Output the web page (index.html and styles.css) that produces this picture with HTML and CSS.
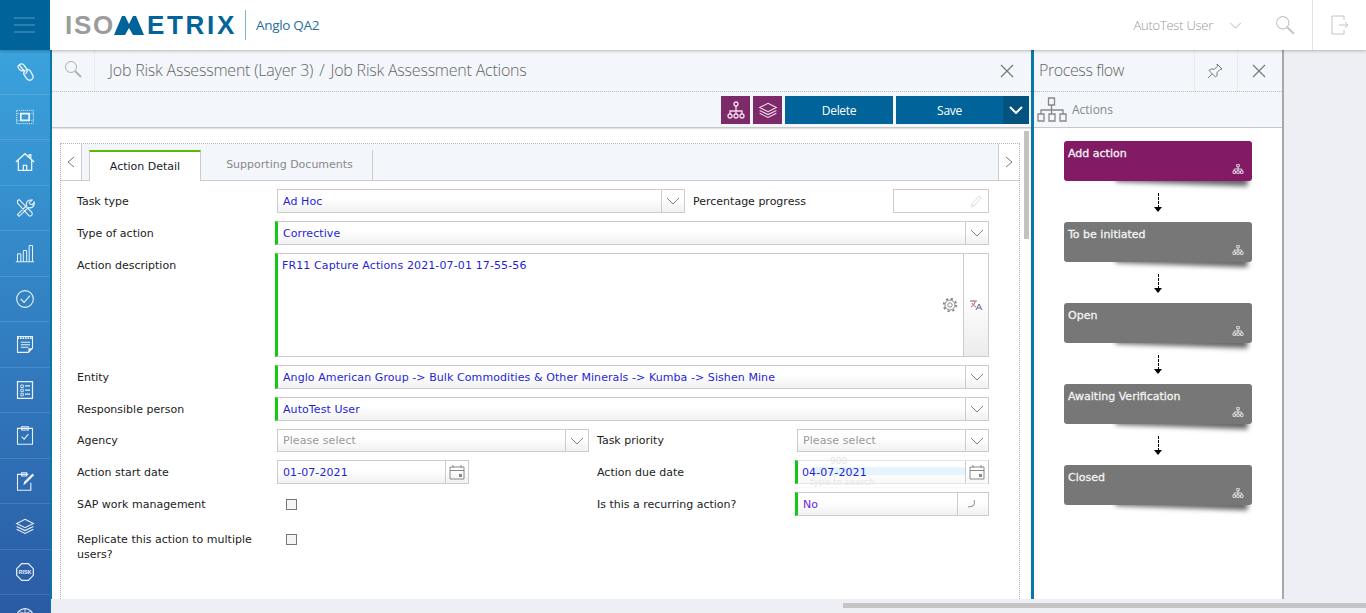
FILE: index.html
```html
<!DOCTYPE html>
<html lang="en">
<head>
    <meta charset="UTF-8">
    <title>IsoMetrix - Job Risk Assessment Actions</title>
    <link rel="stylesheet" href="styles.css">
</head>
<body>
    <svg class="sprites" width="0" height="0">
        <symbol id="i-tree" viewBox="0 0 18 16">
            <path d="M7 .5h4v4H7zM9 4.500V8M3 11V8h12v3M9 8v3M1 11h4v4H1zM7 11h4v4H7zM13 11h4v4h-4z" fill="none" stroke="currentColor" stroke-width="1.500"/>
        </symbol>
        <symbol id="i-tree-round" viewBox="0 0 18 18">
            <circle cx="9" cy="3" r="2" fill="none" stroke="currentColor" stroke-width="1.400"/>
            <path d="M9 5v6M3 13v-3h12v3M9 10v3" fill="none" stroke="currentColor" stroke-width="1.400"/>
            <circle cx="3" cy="15" r="2" fill="none" stroke="currentColor" stroke-width="1.400"/>
            <circle cx="9" cy="15" r="2" fill="none" stroke="currentColor" stroke-width="1.400"/>
            <circle cx="15" cy="15" r="2" fill="none" stroke="currentColor" stroke-width="1.400"/>
        </symbol>
        <symbol id="i-layers" viewBox="0 0 24 24">
            <path d="M12 4l10 5-10 5L2 9zM2 12.500l10 5 10-5M2 16l10 5 10-5" fill="none" stroke="currentColor" stroke-width="1.300"/>
        </symbol>
        <symbol id="i-chev" viewBox="0 0 14 8">
            <path d="M1 1l6 6 6-6" fill="none" stroke="currentColor"/>
        </symbol>
        <symbol id="i-close" viewBox="0 0 14 14">
            <path d="M1 1l12 12M13 1L1 13" fill="none" stroke="currentColor" stroke-width="1.200"/>
        </symbol>
        <symbol id="i-search" viewBox="0 0 18 18">
            <circle cx="7" cy="7" r="5.500" fill="none" stroke="currentColor"/>
            <path d="M11 11l6 6" fill="none" stroke="currentColor" stroke-width="1.800"/>
        </symbol>
        <symbol id="i-cal" viewBox="0 0 16 16">
            <path d="M1 3h14v12H1zM1 6.500h14M4 1v3M12 1v3" fill="none" stroke="currentColor"/>
            <path d="M10 10h3v3h-3z" fill="currentColor"/>
        </symbol>
    </svg>

    <header class="topbar">
        <div class="menu-btn">
            <span></span><span></span><span></span>
        </div>
        <div class="logo">
            <span class="logo-iso">ISO</span>
            <svg class="logo-m" width="30" height="19" viewBox="0 0 30 19">
                <path d="M0 19L8 0h3l4 8 4-8h3l8 19H19l-4-7-4 7z" fill="#00649a"/>
            </svg>
            <span class="logo-rest">ETRIX</span>
        </div>
        <div class="client">Anglo QA2</div>
        <div class="user">
            <span>AutoTest User</span>
            <svg class="user-chev" width="13" height="7"><use href="#i-chev"/></svg>
        </div>
        <svg class="top-search" width="20" height="20"><use href="#i-search"/></svg>
        <div class="logout">
            <svg width="20" height="20" viewBox="0 0 20 20">
                <path d="M14 5V1H2v18h12v-4M9 10h9M15 7l3 3-3 3" fill="none" stroke="currentColor"/>
            </svg>
        </div>
    </header>

    <div class="workspace">
        <nav class="sidebar">
            <a class="side-item"><svg viewBox="0 0 24 24"><path d="M5 3.500c2-2 4.500-1.500 6 .5l3 4.500c1 2 .5 4-1.500 5.500M10.500 10c-2 1-4 .5-5.500-1.500L3.500 6C3 5.500 4 4.500 5 3.500zM13 10c2-1.500 4-1 5.500 1l2.500 4.500c1.500 2 1 4-1 5.500s-4.500 1-6-1l-3-4.500c-1-2-.5-4 1.500-5.500" fill="none" stroke="#fff" stroke-width="1.600"/></svg></a>
            <a class="side-item"><svg viewBox="0 0 24 24"><path d="M2 4h20v16H2z" fill="none" stroke="#fff" stroke-dasharray="1.500 1"/><path d="M7 8h10v8H7z" fill="none" stroke="#fff" stroke-width="2"/><path d="M2 8h5M2 16h5M17 8h5M17 16h5" stroke="#fff" stroke-dasharray="1 1"/></svg></a>
            <a class="side-item"><svg viewBox="0 0 24 24"><path d="M1 12L12 2l11 10M4 10v12h16V10M10 22v-6h4v6M17 6V3h2v5" fill="none" stroke="#fff" stroke-width="1.500"/></svg></a>
            <a class="side-item"><svg viewBox="0 0 24 24"><path d="M3 20l11-11c-1.500-4 2-7.500 6.500-6.500L17 5.500l1.500 2 2.500.5 2-3c1 4.500-3 8-7 6.500L5 22zM3 3l2-1 15 15c1 1 1 4-1 4.500s-2.500-.5-3-1L3 6z" fill="none" stroke="#fff" stroke-width="1.300"/></svg></a>
            <a class="side-item"><svg viewBox="0 0 24 24"><path d="M3 22V13h4v9M10 22V9h4v13M17 22V3h4v19M1 22.500h22" fill="none" stroke="#fff" stroke-width="1.200"/></svg></a>
            <a class="side-item"><svg viewBox="0 0 24 24"><circle cx="12" cy="12" r="10" fill="none" stroke="#fff" stroke-width="1.300"/><path d="M7 12l4 4 7-8" fill="none" stroke="#fff" stroke-width="1.300"/></svg></a>
            <a class="side-item"><svg viewBox="0 0 24 24"><path d="M3 3h18v14l-5 5H3z" fill="none" stroke="#fff" stroke-width="1.300"/><path d="M3 5h18" stroke="#fff" stroke-width="2" stroke-dasharray="2 1"/><path d="M7 10h11M7 13h11M7 16h9" stroke="#fff" stroke-width="1.300"/><path d="M16 22v-5h5z" fill="#fff"/></svg></a>
            <a class="side-item"><svg viewBox="0 0 24 24"><path d="M3 2h18v20H3z" fill="none" stroke="#fff" stroke-width="1.500"/><path d="M7 6h3v3H7zM7 11h3v3H7zM7 16h3v3H7z" fill="none" stroke="#fff"/><path d="M12 7h6M12 12h6M12 17h6" stroke="#fff" stroke-width="1.500"/></svg></a>
            <a class="side-item"><svg viewBox="0 0 24 24"><path d="M3 4h18v19H3zM8 2h8v4H8z" fill="none" stroke="#fff" stroke-width="1.300"/><path d="M8 14l3 3 5-6" fill="none" stroke="#fff" stroke-width="1.300"/></svg></a>
            <a class="side-item"><svg viewBox="0 0 24 24"><path d="M16 4H3v19h16v-9M8 2h6v4H8z" fill="none" stroke="#fff" stroke-width="1.300"/><path d="M10 17l1-4 10-10 2 2-10 10z" fill="#fff"/></svg></a>
            <a class="side-item"><svg viewBox="0 0 24 24"><use href="#i-layers"/></svg></a>
            <a class="side-item"><svg viewBox="0 0 24 24"><path d="M8 2h8l6 6v8l-6 6H8l-6-6V8z" fill="none" stroke="#fff" stroke-width="1.500"/><text class="risk" x="12" y="14.500" text-anchor="middle">RISK</text></svg></a>
            <a class="side-item"><svg viewBox="0 0 24 24"><circle cx="12" cy="12" r="10" fill="none" stroke="#fff" stroke-width="1.500"/><path d="M2 12h20M12 2v20M5 5c4 3 10 3 14 0" fill="none" stroke="#fff"/></svg></a>
        </nav>

        <main class="main">
            <div class="crumbs">
                <div class="crumb-search"><svg width="18" height="18"><use href="#i-search"/></svg></div>
                <div class="crumb-text">Job Risk Assessment (Layer 3)<i>/</i>Job Risk Assessment Actions</div>
                <svg class="crumb-close" width="14" height="14"><use href="#i-close"/></svg>
            </div>
            <div class="toolbar">
                <button class="square-btn"><svg width="18" height="18"><use href="#i-tree-round"/></svg></button>
                <button class="square-btn"><svg width="20" height="20"><use href="#i-layers"/></svg></button>
                <button class="action-btn">Delete</button>
                <div class="save-group">
                    <button class="action-btn save-btn">Save</button>
                    <button class="save-more"><svg width="14" height="8" viewBox="0 0 14 8"><path d="M1 1l6 6 6-6" fill="none" stroke="currentColor" stroke-width="2"/></svg></button>
                </div>
            </div>

            <div class="content">
                <div class="form-scrollbar"></div>
                <div class="form-box">
                    <div class="tabs">
                        <div class="tab-arrow"><svg width="8" height="12" viewBox="0 0 8 12"><path d="M7 1L1 6l6 5" fill="none" stroke="currentColor"/></svg></div>
                        <div class="tab active">Action Detail</div>
                        <div class="tab">Supporting Documents</div>
                        <div class="tab-fill"></div>
                        <div class="tab-arrow right"><svg width="8" height="12" viewBox="0 0 8 12"><path d="M1 1l6 5-6 5" fill="none" stroke="currentColor"/></svg></div>
                    </div>

                    <div class="form">
                        <div class="row">
                            <label class="label">Task type</label>
                            <div class="field w-408"><span class="value">Ad Hoc</span><span class="addon"><svg width="14" height="8"><use href="#i-chev"/></svg></span></div>
                            <label class="label-2">Percentage progress</label>
                            <div class="field plain w-96"><svg class="pencil" width="13" height="13" viewBox="0 0 13 13"><path d="M1 12l1-3 7-8 2 2-7 8zM2 9l2 2" fill="none" stroke="currentColor"/></svg></div>
                        </div>
                        <div class="row">
                            <label class="label">Type of action</label>
                            <div class="field req grow"><span class="value">Corrective</span><span class="addon"><svg width="14" height="8"><use href="#i-chev"/></svg></span></div>
                        </div>
                        <div class="row tall">
                            <label class="label">Action description</label>
                            <div class="field req grow area">
                                <span class="value">FR11 Capture Actions 2021-07-01 17-55-56</span>
                                <svg class="gear" width="16" height="16" viewBox="0 0 16 16"><circle cx="8" cy="8" r="2.200" fill="none" stroke="currentColor"/><circle cx="8" cy="8" r="5" fill="none" stroke="currentColor"/><circle cx="8" cy="8" r="6.300" fill="none" stroke="currentColor" stroke-width="1.800" stroke-dasharray="2.200 2.750"/></svg>
                                <span class="addon translate">
                                    <svg width="14" height="12" viewBox="0 0 14 12"><path d="M1 2h7M4 1v1M2 8c2-1 4-3 4-6M3 4c1 2 2 3 4 4" fill="none" stroke="#a66"/><path d="M7 11l3-6 3 6M8 9h4" fill="none" stroke="#668"/></svg>
                                </span>
                            </div>
                        </div>
                        <div class="row">
                            <label class="label">Entity</label>
                            <div class="field req grow"><span class="value">Anglo American Group -&gt; Bulk Commodities &amp; Other Minerals -&gt; Kumba -&gt; Sishen Mine</span><span class="addon"><svg width="14" height="8"><use href="#i-chev"/></svg></span></div>
                        </div>
                        <div class="row">
                            <label class="label">Responsible person</label>
                            <div class="field req grow"><span class="value">AutoTest User</span><span class="addon"><svg width="14" height="8"><use href="#i-chev"/></svg></span></div>
                        </div>
                        <div class="row short">
                            <label class="label">Agency</label>
                            <div class="field w-312"><span class="value muted">Please select</span><span class="addon"><svg width="14" height="8"><use href="#i-chev"/></svg></span></div>
                            <label class="label-2">Task priority</label>
                            <div class="field w-192"><span class="value muted">Please select</span><span class="addon"><svg width="14" height="8"><use href="#i-chev"/></svg></span></div>
                        </div>
                        <div class="row">
                            <label class="label">Action start date</label>
                            <div class="field w-192"><span class="value">01-07-2021</span><span class="addon"><svg width="16" height="16"><use href="#i-cal"/></svg></span></div>
                            <span class="gap-120"></span>
                            <label class="label-2">Action due date</label>
                            <div class="field req w-194 due">
                                <div class="ghost-list">
                                    <span class="ghost-top">900</span>
                                    <span class="ghost-band"></span>
                                    <span class="ghost-search">type to search</span>
                                </div>
                                <span class="value">04-07-2021</span>
                                <span class="addon"><svg width="16" height="16"><use href="#i-cal"/></svg></span>
                            </div>
                        </div>
                        <div class="row">
                            <label class="label">SAP work management</label>
                            <div class="check-cell"><span class="checkbox"></span></div>
                            <label class="label-2">Is this a recurring action?</label>
                            <div class="field req w-194">
                                <span class="value violet">No</span>
                                <span class="addon wide"><svg width="12" height="10" viewBox="0 0 12 10"><path d="M7 1c1 3 0 5-1 6l-5 1" fill="none" stroke="currentColor"/></svg></span>
                            </div>
                        </div>
                        <div class="row replicate">
                            <label class="label">Replicate this action to multiple users?</label>
                            <div class="check-cell"><span class="checkbox"></span></div>
                        </div>
                    </div>
                </div>
            </div>
        </main>

        <aside class="flow">
            <div class="flow-head">
                <span class="flow-title">Process flow</span>
                <span class="flow-btn"><svg width="16" height="16" viewBox="0 0 16 16"><path d="M10 1l5 5-2 .5-3 3 .2 3L8.500 14 2 7.500 4.500 6l3 .2 3-3zM5 11l-4 4" fill="none" stroke="currentColor"/></svg></span>
                <span class="flow-btn"><svg width="14" height="14"><use href="#i-close"/></svg></span>
            </div>
            <div class="flow-sub">
                <svg width="30" height="26" viewBox="0 0 30 26"><path d="M11.500 1h6v7h-6zM14.500 8v5M4 17v-4h22v4M14.500 13v4M1 17h6v7H1zM12 17h6v7h-6zM23 17h6v7h-6z" fill="none" stroke="currentColor" stroke-width="1.300"/></svg>
                <span>Actions</span>
            </div>
            <div class="flow-list">
                <div class="step current">Add action<svg width="12" height="10"><use href="#i-tree"/></svg></div>
                <div class="step-link"></div>
                <div class="step">To be initiated<svg width="12" height="10"><use href="#i-tree"/></svg></div>
                <div class="step-link"></div>
                <div class="step">Open<svg width="12" height="10"><use href="#i-tree"/></svg></div>
                <div class="step-link"></div>
                <div class="step">Awaiting Verification<svg width="12" height="10"><use href="#i-tree"/></svg></div>
                <div class="step-link"></div>
                <div class="step">Closed<svg width="12" height="10"><use href="#i-tree"/></svg></div>
            </div>
        </aside>
        <div class="rest"></div>
    </div>
    <div class="page-scroll"><span class="page-thumb"></span></div>
</body>
</html>
```

FILE: styles.css
```css
* {
    box-sizing: border-box;
}
html, body {
    height: 100%;
}
body {
    --primary-color: #00649a;
    --purple: #821a66;
    --border: #cccccc;
    --panel: #f3f6fa;
    margin: 0;
    overflow: hidden;
    display: flex;
    flex-direction: column;
    height: 613px;
    background: #eeeff5;
    font-family: "DejaVu Sans", Verdana, sans-serif;
    font-size: 11px;
    color: #222;
}
.sprites {
    position: absolute;
}
button {
    border: 0;
    padding: 0;
    font: inherit;
    color: #fff;
    cursor: pointer;
}

/* top bar */
.topbar {
    display: flex;
    align-items: center;
    flex: none;
    height: 50px;
    background: #fff;
    position: relative;
    z-index: 2;
    box-shadow: 0 1px 3px rgba(0, 0, 0, .25);
}
.menu-btn {
    width: 50px;
    height: 50px;
    padding-right: 1px;
    background: var(--primary-color);
    display: flex;
    flex-direction: column;
    align-items: center;
    justify-content: center;
    gap: 5px;
}
.menu-btn span {
    width: 21px;
    height: 2px;
    background: #2f7fae;
}
.logo {
    display: flex;
    align-items: center;
    margin-left: 15px;
    font-family: "Liberation Sans", Arial, sans-serif;
    font-size: 26px;
    font-weight: bold;
    padding-right: 8px;
    border-right: 1px solid #7fb0cc;
    height: 30px;
}
.logo-iso {
    color: #9c9c9c;
    letter-spacing: 1.700px;
}
.logo-m {
    margin: 0 3px 0 -1px;
}
.logo-rest {
    color: #00649a;
    letter-spacing: 2.700px;
}
.client {
    margin-left: 10px;
    font-family: "Open Sans", sans-serif;
    font-size: 13.500px;
    color: #1f6f9f;
    letter-spacing: -.3px;
}
.user {
    margin-left: auto;
    display: flex;
    align-items: center;
    gap: 16px;
    font-family: "Open Sans", sans-serif;
    font-size: 13px;
    font-weight: 300;
    letter-spacing: -.25px;
    color: #9a9a9a;
}
.user-chev {
    color: #aaa;
}
.top-search {
    margin-left: 33px;
    color: #c4c4c4;
}
.logout {
    margin-left: 17px;
    width: 54px;
    height: 50px;
    border-left: 1px solid #e4e4e4;
    display: flex;
    align-items: center;
    padding-left: 17px;
    color: #c4c4c4;
}

/* layout below the top bar */
.workspace {
    flex: 1;
    display: flex;
    min-height: 0;
}
.sidebar {
    flex: none;
    width: 52px;
    height: 563px;
    overflow: hidden;
    background: linear-gradient(#3aa2dc, #2a5ba5);
    border-right: 2px solid #0b77a9;
}
.side-item {
    display: flex;
    align-items: center;
    justify-content: center;
    height: 45.500px;
    border-bottom: 1px solid rgba(255, 255, 255, .12);
}
.side-item:first-child {
    height: 44.500px;
}
.side-item svg {
    width: 20px;
    height: 20px;
    color: #fff;
    opacity: .9;
}
.risk {
    font-family: "Liberation Sans", Arial, sans-serif;
    font-size: 6.500px;
    font-weight: bold;
    fill: #fff;
}
.main {
    flex: none;
    width: 979px;
    height: 549px;
    background: #fff;
    display: flex;
    flex-direction: column;
}
.crumbs {
    display: flex;
    align-items: center;
    height: 42px;
    flex: none;
    background: var(--panel);
    border-bottom: 1px dotted #bbb;
}
.crumb-search {
    width: 43px;
    height: 41px;
    padding: 10px 0 0 12px;
    border-right: 1px dotted #e0e0e0;
    color: #b0b0b0;
}
.crumb-text {
    margin: 0 0 2px 14px;
    font-family: "Open Sans", sans-serif;
    font-size: 16px;
    font-weight: 300;
    letter-spacing: -.22px;
    color: #666;
}
.crumb-text i {
    font-style: normal;
    margin: 0 6px;
}
.crumb-close {
    margin-left: auto;
    margin-right: 17px;
    color: #777;
}
.toolbar {
    display: flex;
    justify-content: flex-end;
    flex: none;
    gap: 3px;
    height: 36px;
    padding: 4px 2px 0 0;
    background: var(--panel);
    border-bottom: 1px solid #c8c8c8;
    box-shadow: 0 1px 1px rgba(0, 0, 0, .1);
}
.square-btn {
    width: 29px;
    height: 28px;
    background: #7d2a6a;
    color: #f0d8ea;
    display: flex;
    align-items: center;
    justify-content: center;
}
.action-btn {
    width: 108px;
    height: 28px;
    background: var(--primary-color);
    font-family: "Open Sans", sans-serif;
    font-size: 12px;
    letter-spacing: -.3px;
}
.save-group {
    display: flex;
}
.save-btn {
    width: 107px;
}
.save-more {
    width: 26px;
    height: 28px;
    background: #04527e;
}
.content {
    flex: 1;
    position: relative;
    padding: 15px 11px 0 8px;
    min-height: 0;
}
.form-scrollbar {
    position: absolute;
    top: 3px;
    right: 2px;
    width: 5px;
    height: 108px;
    background: #c2c2c2;
}
.form-box {
    height: 100%;
    border: 1px dotted #b5b5b5;
    border-bottom: 0;
}

/* tabs */
.tabs {
    display: flex;
    align-items: stretch;
    height: 37px;
    background: var(--panel);
    border-bottom: 1px solid var(--border);
}
.tab-arrow {
    width: 21px;
    background: #fff;
    border-right: 1px solid var(--border);
    display: flex;
    align-items: center;
    justify-content: center;
    color: #777;
    margin-right: 7px;
    border-bottom: 1px solid var(--border);
    height: 37px;
}
.tab-arrow.right {
    margin: 0;
    border-right: 0;
    border-left: 1px solid var(--border);
}
.tab {
    margin-top: 6px;
    padding: 8px 0 0 6px;
    text-align: center;
    border-right: 1px solid var(--border);
    color: #888;
    width: 172px;
}
.tab.active {
    width: 112px;
    height: 31px;
    background: #fff;
    color: #1a1a2a;
    border-top: 2px solid #5cb800;
    border-left: 1px solid var(--border);
    padding: 8px 0 0;
}
.tab-fill {
    flex: 1;
}

/* form */
.form {
    padding: 8px 30px 0 16px;
    display: flex;
    flex-direction: column;
    gap: 8px;
}
.row {
    display: flex;
    align-items: center;
    height: 24px;
}
.row.short {
    height: 23px;
}
.row.short .field {
    height: 23px;
}
.row.tall {
    height: 104px;
    align-items: flex-start;
}
.row.tall .label {
    padding-top: 5px;
}
.label {
    flex: none;
    width: 200px;
    padding-right: 16px;
    line-height: 15px;
}
.label-2 {
    flex: none;
    width: 208px;
    padding-left: 8px;
}
.field {
    display: flex;
    align-items: center;
    flex: none;
    height: 24px;
    position: relative;
    border: 1px solid var(--border);
    background: linear-gradient(#fff 40%, #f1f1f1);
}
.field.grow {
    flex: 1;
}
.field.req {
    border-left: 3px solid #14c814;
    margin-left: -2px;
}
.field.plain {
    background: #fff;
    justify-content: flex-end;
    padding-right: 5px;
    color: #ddd;
}
.field.area {
    height: 104px;
    align-items: flex-start;
    background: #fff;
}
.w-408 { width: 408px; }
.w-312 { width: 312px; }
.w-192 { width: 192px; }
.w-194 { width: 194px; }
.w-96 { width: 96px; }
.gap-120 {
    flex: none;
    width: 120px;
}
.value {
    flex: 1;
    padding-left: 5px;
    color: #1f1fd8;
    letter-spacing: .08px;
    white-space: nowrap;
    position: relative;
}
.area .value {
    padding: 5px 0 0 4px;
    letter-spacing: .12px;
}
.due .value {
    padding-left: 4px;
}
.value.muted {
    color: #999;
}
.value.violet {
    color: #6a1fe0;
    padding-left: 5px;
}
.addon {
    flex: none;
    width: 23px;
    height: 100%;
    display: flex;
    align-items: center;
    justify-content: center;
    border-left: 1px solid var(--border);
    color: #888;
    position: relative;
}
.addon.wide {
    width: 31px;
}
.addon.translate {
    width: 25px;
    background: linear-gradient(#fff 40%, #ececec);
    padding-bottom: 0;
}
.gear {
    position: absolute;
    top: 43px;
    right: 30px;
    color: #888;
}
.check-cell {
    flex: none;
    width: 312px;
    padding-left: 9px;
    display: flex;
}
.checkbox {
    width: 11px;
    height: 11px;
    border: 1px solid #777;
    background: #f4f4f4;
}
.row.replicate {
    height: 30px;
    margin-top: 8px;
    align-items: flex-start;
}
.replicate .check-cell {
    padding-top: 2px;
}
.replicate .label {
    padding-right: 20px;
}

/* faded dropdown still sitting over the due date */
.ghost-list {
    position: absolute;
    left: 0;
    right: 0;
    top: -5px;
    bottom: -4px;
    background: rgba(255, 255, 255, .5);
    color: #e2e2e2;
    font-size: 9px;
    box-shadow: 0 0 2px rgba(0, 0, 0, .08);
}
.ghost-top {
    position: absolute;
    left: 32px;
    top: 0;
}
.ghost-band {
    position: absolute;
    left: 15px;
    right: 22px;
    top: 11px;
    height: 8px;
    background: #e6f5fd;
}
.ghost-search {
    position: absolute;
    left: 12px;
    top: 21px;
    color: #e8e8e8;
}

/* process flow panel */
.flow {
    flex: none;
    width: 253px;
    height: 549px;
    background: #fff;
    border-left: 3px solid #0b77a9;
    border-right: 2px solid #a8a8a8;
    display: flex;
    flex-direction: column;
}
.flow-head {
    display: flex;
    align-items: center;
    height: 42px;
    flex: none;
    background: var(--panel);
    border-bottom: 1px dotted #bbb;
    color: #777;
}
.flow-title {
    flex: 1;
    padding: 0 0 2px 5px;
    font-family: "Open Sans", sans-serif;
    font-size: 16px;
    font-weight: 300;
    letter-spacing: -.4px;
    color: #666;
}
.flow-btn {
    width: 43px;
    height: 41px;
    padding-right: 3px;
    display: flex;
    align-items: center;
    justify-content: center;
    border-left: 1px dotted #ddd;
}
.flow-btn:last-child {
    width: 45px;
}
.flow-sub {
    display: flex;
    align-items: center;
    gap: 5px;
    height: 36px;
    flex: none;
    padding-left: 3px;
    background: var(--panel);
    border-bottom: 1px solid #c8c8c8;
    color: #888;
    font-family: "Open Sans", sans-serif;
    font-size: 12px;
}
.flow-list {
    display: flex;
    flex-direction: column;
    align-items: center;
    padding: 13px 0 0 0;
    isolation: isolate;
}
.step {
    width: 188px;
    height: 40px;
    position: relative;
    padding: 6px 4px;
    border-radius: 3px;
    background: #777;
    color: #f2f2f2;
    -webkit-text-stroke: .3px currentColor;
}
.step.current {
    background: var(--purple);
}
.step:after {
    content: "";
    position: absolute;
    z-index: -1;
    right: 4px;
    bottom: 5px;
    width: 70%;
    height: 10px;
    box-shadow: 0 8px 5px rgba(0, 0, 0, .6);
    transform: rotate(2deg);
}
.step svg {
    position: absolute;
    right: 8px;
    bottom: 7px;
    color: #e2e2e2;
}
.step-link {
    width: 9px;
    height: 41px;
    position: relative;
}
.step-link:before {
    content: "";
    position: absolute;
    left: 4px;
    top: 12px;
    height: 15px;
    border-left: 1px dashed #000;
}
.step-link:after {
    content: "";
    position: absolute;
    left: 0;
    top: 26px;
    border: 4px solid transparent;
    border-top: 5px solid #000;
    border-bottom: 0;
}
.rest {
    flex: 1;
}
.page-scroll {
    position: absolute;
    top: 599px;
    left: 51px;
    right: 0;
    height: 14px;
    background: #eeeff5;
}
.page-thumb {
    position: absolute;
    left: 792px;
    right: 0;
    top: 4px;
    height: 5px;
    background: #c4c4c4;
}
```
